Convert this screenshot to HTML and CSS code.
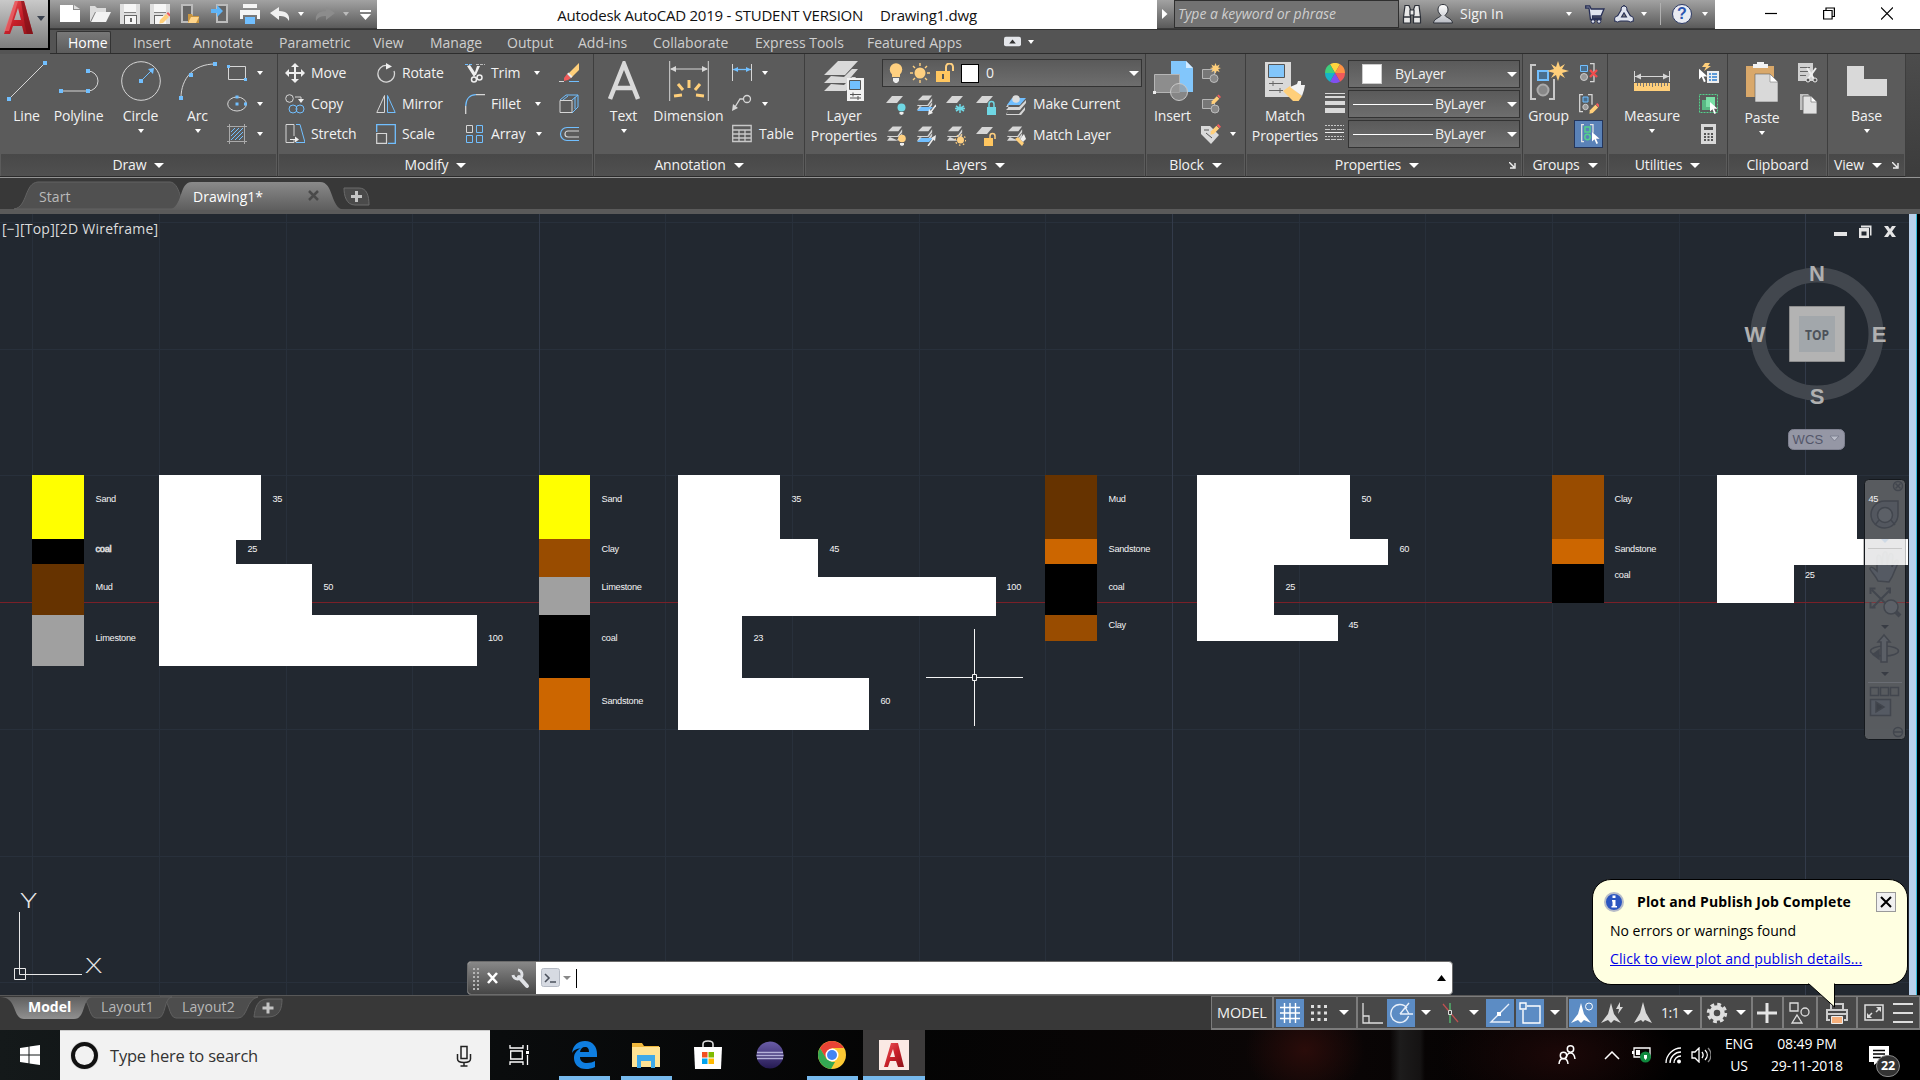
FILE: index.html
```html
<!DOCTYPE html>
<html lang="en">
<head>
<meta charset="utf-8">
<title>Autodesk AutoCAD 2019 - STUDENT VERSION</title>
<link rel="stylesheet" href="styles.css">
</head>
<body>
<svg class="defs" width="0" height="0">
  <defs>
    <linearGradient id="red" x1="0" y1="0" x2="1" y2="1"><stop offset="0" stop-color="#ef5a5c"/><stop offset=".5" stop-color="#c8202a"/><stop offset="1" stop-color="#8d1219"/></linearGradient>
    <linearGradient id="ecl" x1="0" y1="0" x2="0" y2="1"><stop offset="0" stop-color="#6a5da8"/><stop offset="1" stop-color="#251a52"/></linearGradient>
    <linearGradient id="silver" x1="0" y1="0" x2="0" y2="1"><stop offset="0" stop-color="#fff"/><stop offset="1" stop-color="#b9bcc4"/></linearGradient>
    <symbol id="sheets" viewBox="0 0 20 20"><path fill="#d6d6d6" d="M7 0h10l-4 5H2zM5 6l-3 4h10l5-7v3l-4 5H1zM4 11l-3 4h10l6-8v3l-4 5z"/></symbol>
    <symbol id="pencil" viewBox="0 0 12 12"><path fill="#ffcf7a" d="M1 8l6-6 3 3-6 6-3.600.6z"/><path fill="#f25c5c" d="M7.500 1.500L9 0l3 3-1.500 1.500z"/></symbol>
    <symbol id="cursor" viewBox="0 0 10 15"><path fill="#fff" d="M0 0v12l3-3 2.500 6 2-1L5 8.500h4.500z"/></symbol>
  </defs>
</svg>

<header class="top">
  <button class="app">
    <svg width="30" height="34" viewBox="0 0 30 34"><path fill="url(#red)" d="M11 0h9l9 33h-9l-2-8H9l-3 8H0zM14 7l-4 12h7z"/><path fill="#7d1118" d="M17 0h3l9 33h-6l-2-8z" opacity=".6"/><path fill="#f0777a" d="M11 0h3L5 30H0z" opacity=".6"/></svg>
    <i class="tri dark"></i>
  </button>
  <div class="titlebar">
    <div class="qat">
      <svg width="20" height="20" viewBox="0 0 20 20"><path fill="#fff" d="M0 1h13v5h7v12H0z"/><path fill="#ddd" d="M14 1l6 4h-6z"/></svg>
      <svg width="21" height="20" viewBox="0 0 21 20"><path fill="#dcdcdc" d="M0 2h5l2 2h9v4H5L0 18z"/><path fill="#f2f2f2" d="M6 8h15l-5 10H1z"/></svg>
      <svg width="20" height="20" viewBox="0 0 20 20"><path fill="#dedede" d="M0 0h4v9h12V0h4v20H0z"/><path fill="#f6f6f6" d="M4 0h12v8H4zM4 12h12v8H4z"/><path fill="#666" d="M4 11h13v9h-1v-8H5v8H4zM10 14h2v4h-2z"/></svg>
      <svg width="20" height="20" viewBox="0 0 20 20"><path fill="#dedede" d="M0 0h4v9h12V0h4v20H0z"/><path fill="#f6f6f6" d="M4 0h12v8H4zM4 12h12v8H4z"/><path fill="#666" d="M4 11h9v1H5v8H4z"/><use href="#pencil" x="9" y="8" width="12" height="12"/></svg>
      <svg width="20" height="20" viewBox="0 0 20 20"><path fill="#666" stroke="#bcbcbc" stroke-width="2" d="M2 1h10v17H2z"/><path fill="#c89540" d="M8 10h4l1 2h6v7H8z"/><path fill="#ffd58b" d="M11 13h8l-3 6H8z"/></svg>
      <svg width="20" height="20" viewBox="0 0 20 20"><path fill="#666" stroke="#bcbcbc" stroke-width="2" d="M6 1h10v17H6z"/><path fill="#5eb4f7" d="M0 5h6V1l6 6-6 6V9H0z"/></svg>
      <svg width="20" height="20" viewBox="0 0 20 20"><path fill="#f5f5f5" d="M3 0h14v4H3zM0 6h20v9h-3v-4H3v4H0z"/><path fill="#71bfff" d="M5 13h10v7H5z"/></svg>
      <svg width="20" height="20" viewBox="0 0 20 20"><path fill="#f0f0f0" d="M0 9l9-6v4c8 0 11 4 10 10-2-4-5-5-10-5v4z"/></svg>
      <i class="tri"></i>
      <svg width="20" height="20" viewBox="0 0 20 20"><path fill="#8c8c8c" d="M20 9l-9-6v4C3 7 0 11 1 17c2-4 5-5 10-5v4z"/></svg>
      <i class="tri dim"></i>
      <svg width="11" height="20" viewBox="0 0 11 20"><path fill="#fff" d="M0 6h11v2H0zM0 10h11l-5.500 6z"/></svg>
    </div>
    <div class="caption"><span>Autodesk AutoCAD 2019 - STUDENT VERSION</span><span>Drawing1.dwg</span></div>
    <div class="info">
      <svg class="play" width="6" height="10" viewBox="0 0 6 10"><path fill="#fff" d="M0 0l5.500 5L0 10z"/></svg>
      <div class="search">Type a keyword or phrase</div>
      <svg class="i1" width="22" height="20" viewBox="0 0 22 20"><g fill="#e8e8e8" stroke="#2c3038" stroke-width="1.200"><path d="M4 1.500h4l1.500 4V19h-7v-6zM14 1.500h4l1.500 11.500v6h-7V5.500z"/><path d="M9 6h4v5H9z"/></g><path stroke="#2c3038" stroke-width="1.500" d="M2.500 13h7M12.500 13h7"/></svg>
      <svg class="i2" width="20" height="20" viewBox="0 0 20 20"><path fill="url(#silver)" stroke="#2c3038" d="M10 .5c4 0 5 3 5 5.500S13 10 12 11.500c1 2 7 3 7.500 7.500H.5c.5-4.500 6.500-5.500 7.500-7.500C7 10 5 8.500 5 6S6 .5 10 .5z"/></svg>
      <span class="signin">Sign In</span>
      <i class="tri t1"></i>
      <svg class="i3" width="20" height="19" viewBox="0 0 20 19"><path fill="#dfe3ee" stroke="#272f55" stroke-width="1.300" d="M.7 1h4l1.500 3H19l-3 7H7.500v2H16v1.500H5.500L4 3H.7z"/><circle cx="8" cy="16.500" r="1.800" fill="#dfe3ee" stroke="#272f55"/><circle cx="14" cy="16.500" r="1.800" fill="#dfe3ee" stroke="#272f55"/></svg>
      <svg class="i4" width="20" height="18" viewBox="0 0 20 18"><path fill="none" stroke="#272f55" stroke-width="5" d="M10 4L4 14h12z"/><g fill="#dfe3ee" stroke="#272f55"><circle cx="10" cy="4" r="3"/><circle cx="3.500" cy="14" r="3"/><circle cx="16.500" cy="14" r="3"/></g><path fill="none" stroke="#dfe3ee" stroke-width="2.800" d="M10 4L4 14h12z"/></svg>
      <i class="tri t2"></i>
      <i class="sep"></i>
      <span class="help">?</span>
      <i class="tri t3"></i>
    </div>
    <div class="winbtns">
      <svg width="12" height="13" viewBox="0 0 12 13"><path stroke="#000" stroke-width="1.200" d="M0 6.500h12"/></svg>
      <svg width="12" height="13" viewBox="0 0 12 13"><path fill="none" stroke="#000" stroke-width="1.200" d="M.6 3.500h8.500v8.500H.6zM3 3V1h8.400v8.500H9"/></svg>
      <svg width="12" height="13" viewBox="0 0 12 13"><path stroke="#000" stroke-width="1.200" d="M0 .5l12 12M12 .5l-12 12"/></svg>
    </div>
  </div>
  <nav class="tabs">
    <span class="on">Home</span><span>Insert</span><span>Annotate</span><span>Parametric</span><span>View</span><span>Manage</span><span>Output</span><span>Add-ins</span><span>Collaborate</span><span>Express Tools</span><span>Featured Apps</span>
    <svg width="17" height="11" viewBox="0 0 18 11"><rect width="18" height="10" y=".5" rx="2" fill="#e4e6ea"/><path fill="#333" d="M5.500 7.500L9 3.500l3.500 4z"/></svg><i class="tri"></i>
  </nav>
</header>

<main class="ribbon">
  <section class="panel draw">
    <div class="body">
      <div class="tool"><svg width="40" height="40" viewBox="0 0 40 40"><path stroke="#d6d6d6" d="M2 38L38 2"/><path fill="#71bfff" d="M0 36h4v4H0zM36 0h4v4h-4z"/></svg><span>Line</span></div>
      <div class="tool"><svg width="40" height="40" viewBox="0 0 40 40"><path fill="none" stroke="#d6d6d6" d="M2 30h27a9.500 9.500 0 0 0 0-20"/><path fill="#71bfff" d="M0 28h4v4H0zM27 28h4v4h-4zM27 8h4v4h-4z"/></svg><span>Polyline</span></div>
      <div class="tool"><svg width="40" height="40" viewBox="0 0 40 40"><circle cx="20" cy="20" r="19.300" fill="none" stroke="#d6d6d6"/><path stroke="#71bfff" d="M20 20l11-11"/><path fill="#71bfff" d="M18 18h4v4h-4zM33 7l-1 6-5-5z"/></svg><span>Circle</span><i class="tri"></i></div>
      <div class="tool"><svg width="40" height="40" viewBox="0 0 40 40"><path fill="none" stroke="#d6d6d6" d="M3 37C3 17 16 3 37 3"/><path fill="#71bfff" d="M1 35h4v4H1zM11 12h4v4h-4zM35 1h4v4h-4z"/></svg><span>Arc</span><i class="tri"></i></div>
      <div class="rows">
        <div><svg width="20" height="20" viewBox="0 0 20 20"><path fill="none" stroke="#d6d6d6" d="M1.500 3.500h17v13h-17z"/><path fill="#71bfff" d="M0 2h3v3H0zM17 15h3v3h-3z"/></svg><i class="tri"></i></div>
        <div><svg width="20" height="20" viewBox="0 0 20 20"><ellipse cx="10" cy="10" rx="9.300" ry="7" fill="none" stroke="#d6d6d6"/><path fill="#71bfff" d="M8.500 1.500h3v3h-3zM8.500 8.500h3v3h-3zM17 8.500h3v3h-3z"/></svg><i class="tri"></i></div>
        <div><svg width="20" height="20" viewBox="0 0 20 20"><path stroke="#aaa" d="M0 2.500h20M0 17.500h20M2.500 0v20M17.500 0v20"/><path stroke="#71bfff" d="M4 8l4-4M4 12l8-8M4 16l12-12M8 16l8-8M12 16l4-4"/></svg><i class="tri"></i></div>
      </div>
    </div>
    <footer>Draw<i class="tri wide"></i></footer>
  </section>

  <section class="panel modify">
    <div class="body">
      <div class="rows m1">
        <div><svg width="20" height="20" viewBox="0 0 20 20"><path fill="#eee" d="M10 0l4 4h-3v5h5V6l4 4-4 4v-3h-5v5h3l-4 4-4-4h3v-5H4v3l-4-4 4-4v3h5V4H6z"/></svg>Move</div>
        <div><svg width="20" height="20" viewBox="0 0 20 20"><g fill="none" stroke="#d6d6d6"><circle cx="4.500" cy="4.500" r="3.800"/><path d="M10 3h6v3"/></g><path fill="#eee" d="M13 5h6l-3 4z"/><g fill="none" stroke="#71bfff"><circle cx="8" cy="15" r="4"/><circle cx="15" cy="15" r="4"/></g></svg>Copy</div>
        <div><svg width="20" height="20" viewBox="0 0 20 20"><path fill="none" stroke="#d6d6d6" d="M9 12V.5H1v18h8v-3"/><path fill="none" stroke="#71bfff" d="M11 .5h4l5 18h-9"/><path stroke="#eee" d="M5 15.500h6"/><path fill="#eee" d="M10 12.500l4 3-4 3z"/></svg>Stretch</div>
      </div>
      <div class="rows m2">
        <div><svg width="20" height="20" viewBox="0 0 20 20"><path fill="none" stroke="#d6d6d6" stroke-width="1.300" d="M11 2.500A8.300 8.300 0 1 0 18 8"/><path fill="#eee" d="M10 0l6 3.500-6 3z"/></svg>Rotate</div>
        <div><svg width="20" height="20" viewBox="0 0 20 20"><path fill="none" stroke="#d6d6d6" d="M8.500 1.500v17H.8z"/><path fill="none" stroke="#71bfff" d="M11.500 1.500v17h7.700z"/></svg>Mirror</div>
        <div><svg width="20" height="20" viewBox="0 0 20 20"><path fill="none" stroke="#71bfff" stroke-width="1.300" d="M.7 8V.7h18.600v18.600H12"/><path fill="none" stroke="#d6d6d6" stroke-width="1.200" d="M.7 9.500h9.800v9.800H.7z"/></svg>Scale</div>
      </div>
      <div class="rows m3">
        <div><svg width="20" height="20" viewBox="0 0 20 20"><path stroke="#71bfff" stroke-dasharray="3 1" d="M0 1.500h8"/><path stroke="#bbb" stroke-dasharray="3 1" d="M11 1.500h9"/><path fill="#eee" d="M2 3l3-1 6 9-2 3zM12 3h3l-4 9H9z"/><g fill="none" stroke="#eee" stroke-width="1.500"><circle cx="9" cy="16.500" r="2.500"/><circle cx="14.500" cy="14.500" r="2.500"/></g></svg>Trim<i class="tri"></i></div>
        <div><svg width="20" height="20" viewBox="0 0 20 20"><path fill="none" stroke="#71bfff" stroke-width="1.300" d="M.7 12C1 5 5 .7 11 .7"/><path fill="none" stroke="#d6d6d6" stroke-width="1.300" d="M.7 12v8M11 .7h9"/></svg>Fillet<i class="tri f"></i></div>
        <div><svg width="20" height="20" viewBox="0 0 20 20"><path fill="none" stroke="#d6d6d6" d="M1.500 1.500h6v7h-6z"/><path fill="none" stroke="#71bfff" d="M11.500 1.500h6v7h-6zM1.500 11.500h6v7h-6zM11.500 11.500h6v7h-6z"/></svg>Array<i class="tri a"></i></div>
      </div>
      <div class="rows">
        <div><svg width="20" height="20" viewBox="0 0 20 20"><path stroke="#d6d6d6" d="M0 18.500h5"/><path stroke="#71bfff" d="M10 18.500h10"/><path fill="#ffcf7a" d="M9 11L20 0v7l-8 8z"/><path fill="#f25c5c" d="M5 15l3-4 4 4-3 2-4 1z"/><path fill="#eee" d="M8 11l1.500-1.500 4 4L12 15z"/></svg></div>
        <div><svg width="20" height="20" viewBox="0 0 20 20"><path fill="none" stroke="#71bfff" d="M1 6l6-5h12v12l-6 6M13 6l6-5M4 6l5-4M16 3v12"/><path fill="none" stroke="#d6d6d6" d="M1 6.500h12v12H1z"/></svg></div>
        <div><svg width="20" height="20" viewBox="0 0 20 20"><path fill="none" stroke="#71bfff" stroke-width="1.200" d="M20 3.500H8a6.500 6.500 0 0 0 0 13h12"/><path fill="none" stroke="#d6d6d6" stroke-width="1.200" d="M20 7H9a3 3 0 0 0 0 6h11"/></svg></div>
      </div>
    </div>
    <footer>Modify<i class="tri wide"></i></footer>
  </section>

  <section class="panel annot">
    <div class="body">
      <div class="tool"><svg width="40" height="40" viewBox="0 0 40 40"><path fill="none" stroke="#d9d9d9" stroke-width="4.500" d="M6 38L20 3l14 35M11 27h18"/></svg><span>Text</span><i class="tri"></i></div>
      <div class="tool"><svg width="40" height="40" viewBox="0 0 40 40"><path stroke="#d6d6d6" d="M.7 0v40M39.300 0v40M2 8h36"/><path fill="#d6d6d6" d="M1 8l6-3v6zM39 8l-6-3v6z"/><path stroke="#ffcf7a" stroke-width="3" d="M20 19v8M9 23l5 6M31 23l-5 6M5 35l8-1M35 35l-8-1"/></svg><span>Dimension</span></div>
      <div class="rows">
        <div><svg width="20" height="20" viewBox="0 0 20 20"><path stroke="#d6d6d6" d="M.5 1v17M19.500 1v17"/><path stroke="#71bfff" stroke-width="1.300" d="M1 6.500h18"/><path fill="#71bfff" d="M1 6.500l5-2.500v5zM19 6.500L14 4v5z"/></svg><i class="tri"></i></div>
        <div><svg width="20" height="20" viewBox="0 0 20 20"><circle cx="15" cy="5" r="3.500" fill="none" stroke="#d6d6d6" stroke-width="1.300"/><path fill="none" stroke="#d6d6d6" stroke-width="1.300" d="M11 5H8l-5 8"/><path fill="#d6d6d6" d="M0 17l1-7 5 4z"/></svg><i class="tri"></i></div>
        <div><svg width="20" height="20" viewBox="0 0 20 20"><path fill="none" stroke="#c8c8c8" stroke-width="1.300" d="M.7 1.500h18.500v16H.7zM.7 6h18.500M.7 10h18.500M.7 14h18.500M7 6v12M13 6v12"/></svg>Table</div>
      </div>
    </div>
    <footer>Annotation<i class="tri wide"></i></footer>
  </section>

  <section class="panel layers">
    <div class="body">
      <div class="tool two"><svg width="40" height="40" viewBox="0 0 40 40"><path fill="#d9d9d9" d="M14 0h20L21 14H0zM7 15L0 22h22l12-14h-6l-8 8zM7 23l-7 7h22l4-5 6-9h-4L20 24z"/><path fill="#f2f2f2" d="M23 17h17v23H23z"/><path fill="#71bfff" stroke="#555" d="M25.500 19.500h11v9h-11z"/><path stroke="#555" d="M26 33.500h11M26 37h11M29 31.500v4M34 35v4"/></svg><span>Layer<br>Properties</span></div>
      <div class="lcol">
        <div class="combo">
          <svg width="14" height="20" viewBox="0 0 14 20"><circle cx="7" cy="6.500" r="6.200" fill="#ffd080"/><path fill="#ffd080" d="M3 10h8v4H3z"/><path fill="#eee" d="M4 15h6v3l-2 2H6l-2-2z"/></svg>
          <svg width="20" height="20" viewBox="0 0 20 20"><circle cx="10" cy="10" r="5.500" fill="#ffd080"/><path stroke="#ffd080" stroke-width="1.400" d="M10 0v3M10 17v3M0 10h3M17 10h3M3 3l2 2M15 15l2 2M17 3l-2 2M3 17l2-2"/></svg>
          <svg width="18" height="20" viewBox="0 0 18 20"><path fill="#ffc65f" d="M0 8h14v11H0z"/><path fill="none" stroke="#ffd080" stroke-width="2" d="M10 8V4a3.500 3.500 0 0 1 7 0v4"/><path fill="#555" d="M6 11h2v5H6z"/></svg>
          <i class="swatch b"></i><span>0</span><i class="tri wide"></i>
        </div>
        <div class="lrow">
          <svg width="20" height="20" viewBox="0 0 20 20"><path fill="#d6d6d6" d="M6 1h11l-6 7H0z"/><circle cx="15.500" cy="12.500" r="4" fill="#6fd7e4"/><path fill="#eee" d="M13.500 17h4v2l-2 1-2-1z"/></svg>
          <svg width="20" height="20" viewBox="0 0 20 20"><use href="#sheets" width="19" height="20"/><path fill="#71bfff" d="M1 16l4-4h12l-4 4z"/><path stroke="#eee" stroke-width="1.500" d="M20 10l-6 8"/><path fill="#eee" d="M12 20l1-6 4 4z"/></svg>
          <svg width="20" height="20" viewBox="0 0 20 20"><path fill="#d6d6d6" d="M6 1h11l-6 7H0z"/><path stroke="#6fd7e4" stroke-width="1.500" d="M14 9v9M10 11l8 5M10 16l8-5M9 13.500h10"/></svg>
          <svg width="20" height="20" viewBox="0 0 20 20"><path fill="#d6d6d6" d="M6 1h11l-6 7H0z"/><path fill="#6fd7e4" d="M11 12h9v8h-9z"/><path fill="none" stroke="#6fd7e4" stroke-width="1.500" d="M13 12v-3a2.500 2.500 0 0 1 5 0v3"/></svg>
          <svg width="20" height="20" viewBox="0 0 20 20"><path fill="#d6d6d6" d="M3 8L0 12h13l7-7v3l-6 7H0l2-2zM2 16l-2 3h13l6-7v3l-4 5H0z"/><path fill="#71bfff" d="M6 3h14l-6 7H1z"/><circle cx="10" cy="4" r="3.800" fill="#ddd"/></svg>
          <span>Make Current</span>
        </div>
        <div class="lrow">
          <svg width="20" height="20" viewBox="0 0 20 20"><use href="#sheets" width="19" height="20"/><circle cx="16" cy="12.500" r="3.800" fill="#ffd080"/><path fill="#eee" d="M14 17h4v2l-2 1-2-1z"/></svg>
          <svg width="20" height="20" viewBox="0 0 20 20"><use href="#sheets" width="19" height="20"/><path fill="#71bfff" d="M1 16l4-4h12l-4 4z"/><path stroke="#eee" stroke-width="1.500" d="M12 20l5-7"/><path fill="#eee" d="M20 9l-1 6-4-3z"/></svg>
          <svg width="20" height="20" viewBox="0 0 20 20"><use href="#sheets" width="19" height="20"/><circle cx="14.500" cy="14" r="3.500" fill="#ffd080"/><circle cx="14.500" cy="14" r="5.200" fill="none" stroke="#ffd080" stroke-width="1.300" stroke-dasharray="1.500 2.500"/></svg>
          <svg width="20" height="20" viewBox="0 0 20 20"><path fill="#d6d6d6" d="M6 1h11l-6 7H0z"/><path fill="#ffc65f" d="M8 12h9v8H8z"/><path fill="none" stroke="#ffd080" stroke-width="1.500" d="M14 12v-2a2.500 2.500 0 0 1 5 0v3"/></svg>
          <svg width="20" height="20" viewBox="0 0 20 20"><use href="#sheets" width="19" height="20"/><path fill="#ffcf7a" d="M9 13l3-2 6 6-2 3z"/><path fill="#eee" d="M14 13l4-5 2 5-3 3z"/></svg>
          <span>Match Layer</span>
        </div>
      </div>
    </div>
    <footer>Layers<i class="tri wide"></i></footer>
  </section>

  <section class="panel block">
    <div class="body">
      <div class="tool"><svg width="40" height="40" viewBox="0 0 40 40"><path fill="#82c6fb" d="M18 0h15l7 7v24H18z"/><path fill="#d5ecff" d="M33 0l7 7h-7z"/><path fill="#8d8d8d" stroke="#b5b5b5" d="M1.500 13.500h25v18h-25z"/><circle cx="26" cy="31" r="8.500" fill="#999" fill-opacity=".7" stroke="#c8c8c8"/><path fill="#eee" d="M0 30h3v3H0z"/></svg><span>Insert</span></div>
      <div class="rows">
        <div><svg width="20" height="20" viewBox="0 0 20 20"><path fill="#777" stroke="#b5b5b5" d="M1.500 6.500h12v9h-12z"/><circle cx="13" cy="15.500" r="4" fill="#888" stroke="#bbb"/><path fill="#ffcf7a" d="M14.500 0l1.200 3 3-1.500-1.500 3 3 .5-3 1.200 1.500 3-3-1.500-1.200 3-1.200-3-3 1.500 1.500-3-3-1.200 3-.5-1.500-3 3 1.500z"/></svg></div>
        <div><svg width="20" height="20" viewBox="0 0 20 20"><path fill="#777" stroke="#b5b5b5" d="M1.500 5.500h12v9h-12z"/><circle cx="14" cy="15" r="4" fill="#888" stroke="#bbb"/><use href="#pencil" x="10" width="10" height="11"/></svg></div>
        <div><svg width="20" height="20" viewBox="0 0 20 20"><path fill="#d9d9d9" d="M0 2h9l9 9-8 9-10-10z"/><path stroke="#555" d="M3 6h5M5 9l6 5"/><use href="#pencil" x="9" width="11" height="11"/></svg><i class="tri"></i></div>
      </div>
    </div>
    <footer>Block<i class="tri wide"></i></footer>
  </section>

  <section class="panel props">
    <div class="body">
      <div class="tool two"><svg width="40" height="40" viewBox="0 0 40 40"><path fill="#d9d9d9" d="M0 1h26v35H0z"/><path fill="#82c6fb" stroke="#555" d="M3.500 3.500h16v13h-16z"/><path stroke="#666" d="M4 22.500h14M4 29.500h14M8 20v5M15 27v5"/><path fill="#ffcf7a" d="M18 30l7-5 12 10-4 6h-4z"/><path fill="#f2f2f2" d="M25 26l7-3 1-3h3v4h4l-1 5-2 6z"/></svg><span>Match<br>Properties</span></div>
      <div class="rows pi">
        <div><svg width="20" height="20" viewBox="-10 -10 20 20"><path fill="#ffd53e" d="M0 0L-5-8.700A10 10 0 0 1 5-8.700z"/><path fill="#ff9243" d="M0 0L5-8.700A10 10 0 0 1 10 0z"/><path fill="#f05a5a" d="M0 0h10A10 10 0 0 1 5 8.700z"/><path fill="#8050f0" d="M0 0L5 8.700A10 10 0 0 1-5 8.700z"/><path fill="#16b4c8" d="M0 0L-5 8.700A10 10 0 0 1-10 0z"/><path fill="#3fcf7c" d="M0 0h-10A10 10 0 0 1-5-8.700z"/></svg></div>
        <div><svg width="20" height="20" viewBox="0 0 20 20"><path fill="#d9d9d9" d="M0 0h20v1H0zM0 3h20v2H0zM0 8h20v4H0zM0 15h20v5H0z"/></svg></div>
        <div><svg width="20" height="20" viewBox="0 0 20 20"><path stroke="#c8c8c8" stroke-dasharray="2 1" d="M0 2.500h19M0 13.500h19"/><path stroke="#c8c8c8" stroke-dasharray="5 1" d="M0 6.500h19M0 16.500h19"/><path stroke="#eee" d="M0 9.500h19"/></svg></div>
      </div>
      <div class="pcombos">
        <div class="combo c1"><i class="swatch"></i><span>ByLayer</span><i class="tri wide"></i></div>
        <div class="combo"><i class="rule"></i><span>ByLayer</span><i class="tri wide"></i></div>
        <div class="combo"><i class="rule"></i><span>ByLayer</span><i class="tri wide"></i></div>
      </div>
    </div>
    <footer class="ex">Properties<i class="tri wide"></i><svg class="diag" width="7" height="7" viewBox="0 0 7 7"><path fill="none" stroke="#eee" stroke-width="1.400" d="M0 0l5 5M6 1v5H1"/></svg></footer>
  </section>

  <section class="panel groups">
    <div class="body">
      <div class="tool"><svg width="40" height="40" viewBox="0 0 40 40"><path fill="none" stroke="#c8c8c8" stroke-width="2" d="M7 4H2v34h5M20 38h5V18"/><path fill="#4a6f8e" stroke="#71bfff" stroke-width="2" d="M9 10h10v9H9z"/><circle cx="14" cy="29" r="5.500" fill="#888" stroke="#aaa" stroke-width="2"/><path fill="#ffcf7a" d="M29 0l2 6 5-3-3 5 7 2-7 2 3 5-5-3-2 6-2-6-5 3 3-5-7-2 7-2-3-5 5 3z"/></svg><span>Group</span></div>
      <div class="rows">
        <div><svg width="20" height="20" viewBox="0 0 20 20"><path fill="none" stroke="#d6d6d6" stroke-width="1.300" d="M11 .7h4v18h-4"/><path fill="#4a6f8e" stroke="#71bfff" d="M1.500 2.500h7v6h-7z"/><circle cx="5" cy="14" r="3.500" fill="#999" stroke="#ccc"/><path stroke="#f04c4c" stroke-width="2.400" d="M11 7l7 7M18 7l-7 7"/></svg></div>
        <div><svg width="20" height="20" viewBox="0 0 20 20"><path fill="none" stroke="#d6d6d6" stroke-width="1.300" d="M4 .7H.7v17H4M9 .7h4v10"/><path fill="#4a6f8e" stroke="#71bfff" d="M4 3h5v5H4z"/><circle cx="6.500" cy="13" r="2.700" fill="#999" stroke="#ccc"/><use href="#pencil" x="10" y="9" width="11" height="11"/></svg></div>
        <div class="sel"><svg width="20" height="20" viewBox="0 0 20 20"><path fill="none" stroke="#e4e4e4" stroke-width="1.300" d="M4 .7H1.700v17H4M10 .7h3v8"/><path fill="none" stroke="#53d28b" stroke-width="1.500" d="M5 3h5v5H5z"/><circle cx="7.500" cy="13" r="2.700" fill="none" stroke="#53d28b" stroke-width="1.500"/><use href="#cursor" x="12" y="8" width="8" height="12"/></svg></div>
      </div>
    </div>
    <footer>Groups<i class="tri wide"></i></footer>
  </section>

  <section class="panel utils">
    <div class="body">
      <div class="tool"><svg width="40" height="40" viewBox="0 0 40 40"><path stroke="#d6d6d6" d="M2.500 10v11M37.500 10v11M3 15.500h34"/><path fill="#d6d6d6" d="M3 15.500l6-3v6zM37 15.500l-6-3v6z"/><path fill="#ffcf7a" d="M2 22h36v8H2z"/><path stroke="#777" d="M5.500 22v3M8.500 22v3M11.500 22v4M14.500 22v3M17.500 22v3M20.500 22v4M23.500 22v3M26.500 22v3M29.500 22v4M32.500 22v3M35.500 22v3"/></svg><span>Measure</span><i class="tri"></i></div>
      <div class="rows">
        <div><svg width="20" height="20" viewBox="0 0 20 20"><use href="#cursor" y="5" width="9" height="15"/><path fill="#ffcf7a" d="M6 0h5l-2 3h3L5 8l2-4H3z"/><path fill="#eee" d="M8 8h12v12H8z"/><path stroke="#2f7fd0" stroke-width="1.500" d="M10 11h2M13 11h5M10 14h2M13 14h5M10 17h2M13 17h5"/></svg></div>
        <div><svg width="20" height="20" viewBox="0 0 20 20"><path fill="none" stroke="#53d28b" stroke-dasharray="2 1" d="M.5.5h18v18H.5z"/><path fill="#59b984" d="M3 6h4v7h6v3H3z"/><path fill="#7be0a7" d="M7 3h9v10H7z"/><use href="#cursor" x="11" y="8" width="8" height="12"/></svg></div>
        <div><svg width="20" height="20" viewBox="0 0 20 20"><path fill="#d9d9d9" d="M2 0h15v20H2z"/><path fill="#555" d="M5 3h9v3H5z"/><path stroke="#555" stroke-width="2" stroke-dasharray="2 1.500" d="M5 10h9M5 13h9M5 16h9"/></svg></div>
      </div>
    </div>
    <footer>Utilities<i class="tri wide"></i></footer>
  </section>

  <section class="panel clip">
    <div class="body">
      <div class="tool"><svg width="40" height="42" viewBox="0 0 40 42"><path fill="#d9a86a" d="M4 5h28v31H4z"/><path fill="#f2f2f2" d="M11 3h4V1h7v2h4v4H11z"/><path fill="#d9d9d9" stroke="#5b5b5b" stroke-width=".6" d="M13 13h15l8 8v20H13z"/><path fill="#fff" stroke="#666" stroke-width=".5" d="M28 13l8 8h-8z"/></svg><span>Paste</span><i class="tri"></i></div>
      <div class="rows">
        <div><svg width="21" height="20" viewBox="0 0 21 20"><path fill="#d0d0d0" d="M1 0h15v18H1z"/><path stroke="#666" d="M3 4.500h10M3 8.500h8M3 12.500h6"/><path stroke="#eee" stroke-width="2" d="M10 5l7 11M19 5l-8 11"/><circle cx="11" cy="17" r="2" fill="#555" stroke="#eee"/><circle cx="18" cy="17" r="2" fill="#555" stroke="#eee"/></svg></div>
        <div><svg width="21" height="20" viewBox="0 0 21 20"><path fill="#c0c0c0" d="M3 0h8l4 4v12H3z"/><path fill="#e2e2e2" stroke="#5c5c5c" stroke-width=".8" d="M6 2h8l6 6v12H6z"/><path fill="#fff" stroke="#777" stroke-width=".7" d="M14 2l6 6h-6z"/></svg></div>
      </div>
    </div>
    <footer>Clipboard</footer>
  </section>

  <section class="panel view">
    <div class="body">
      <div class="tool"><svg width="40" height="40" viewBox="0 0 40 40"><path fill="#d9d9d9" d="M0 5h17v13h23v17H0z"/></svg><span>Base</span><i class="tri"></i></div>
    </div>
    <footer class="ex">View<i class="tri wide"></i><svg class="diag" width="7" height="7" viewBox="0 0 7 7"><path fill="none" stroke="#eee" stroke-width="1.400" d="M0 0l5 5M6 1v5H1"/></svg></footer>
  </section>
</main>

<div class="files">
  <svg class="shapes" width="400" height="32" viewBox="0 0 400 32">
    <defs><linearGradient id="ft" x1="0" y1="0" x2="0" y2="1"><stop offset="0" stop-color="#8a8a8a"/><stop offset="1" stop-color="#5e5e5e"/></linearGradient></defs>
    <path fill="#505050" stroke="#626262" d="M14 31c14-2 10-26 24-27h132c10 1 10 20 16 27z"/>
    <path fill="url(#ft)" d="M168 32c16-2 10-28 24-28h128c14 0 10 26 24 28z"/>
    <path fill="#4a4a4a" stroke="#6a6a6a" d="M344 10h15c8 0 10 8 10 17h-14c-9 0-11-10-11-17z"/>
    <path stroke="#c4c4c4" stroke-width="3" d="M356.500 13v11M351 18.500h11"/>
    <path stroke="#4a4a4a" stroke-width="2.500" d="M309 13l9 9M318 13l-9 9"/>
  </svg>
  <span class="f1">Start</span><span class="f2">Drawing1*</span>
</div>

<div class="viewport">
  <svg class="drawing" width="1909" height="781" viewBox="0 214 1909 781">
    <path stroke="#28303b" d="M32.500 214v781M159.500 214v781M286.500 214v781M412.500 214v781M665.500 214v781M792.500 214v781M919.500 214v781M1045.500 214v781M1299.500 214v781M1425.500 214v781M1552.500 214v781M1679.500 214v781M0 222.500h1909M0 349.500h1909M0 475.500h1909M0 729.500h1909M0 856.500h1909M0 982.500h1909"/>
    <path stroke="#333b4a" d="M539.500 214v781M1172.500 214v781M1805.500 214v781"/>
    <path stroke="#7a2028" d="M0 602.500h1909"/>
    <g>
      <path fill="#ff0" d="M32 475h52v64H32zM539 475h51v64h-51z"/>
      <path fill="#000" d="M32 539h52v25H32zM539 615h51v63h-51zM1045 564h52v51h-52zM1552 564h52v39h-52z"/>
      <path fill="#663300" d="M32 564h52v51H32zM1045 475h52v64h-52z"/>
      <path fill="#a0a0a0" d="M32 615h52v51H32zM539 577h51v38h-51z"/>
      <path fill="#994c00" d="M539 539h51v38h-51zM1045 615h52v26h-52zM1552 475h52v64h-52z"/>
      <path fill="#cc6600" d="M539 678h51v52h-51zM1045 539h52v25h-52zM1552 539h52v25h-52z"/>
    </g>
    <g fill="#fff">
      <path d="M159 475h102v65h-25v24h76v51h165v51H159z"/>
      <path d="M678 475h102v64h38v38h178v39H742v62h127v52H678z"/>
      <path d="M1197 475h153v64h38v26h-114v50h64v26h-141z"/>
      <path d="M1717 475h140v64h51v26h-114v38h-77z"/>
    </g>
    <g class="lbl">
      <text x="95.500" y="502">Sand</text><text x="95.500" y="552" class="glow">coal</text><text x="95.500" y="590">Mud</text><text x="95.500" y="641">Limestone</text>
      <text x="272.500" y="502">35</text><text x="247.500" y="552">25</text><text x="323.500" y="590">50</text><text x="488" y="641">100</text>
      <text x="601.500" y="502">Sand</text><text x="601.500" y="552">Clay</text><text x="601.500" y="590">Limestone</text><text x="601.500" y="641">coal</text><text x="601.500" y="704">Sandstone</text>
      <text x="791.500" y="502">35</text><text x="829.500" y="552">45</text><text x="1006.500" y="590">100</text><text x="753.500" y="641">23</text><text x="880.500" y="704">60</text>
      <text x="1108.500" y="502">Mud</text><text x="1108.500" y="552">Sandstone</text><text x="1108.500" y="590">coal</text><text x="1108.500" y="628">Clay</text>
      <text x="1361.500" y="502">50</text><text x="1399.500" y="552">60</text><text x="1285.500" y="590">25</text><text x="1348.500" y="628">45</text>
      <text x="1614.500" y="502">Clay</text><text x="1614.500" y="552">Sandstone</text><text x="1614.500" y="578">coal</text>
      <text x="1805" y="578">25</text>
    </g>
    <path fill="none" stroke="#f4f4f4" d="M926 677.500h46M977 677.500h46M974.500 629v45M974.500 681v45M972.500 674.500h4v6h-4z"/>
    <path fill="none" stroke="#e8e8e8" d="M14.500 968.500h11v11h-11zM19.500 912v62.500H82"/>
    <text class="ucs" x="20.500" y="908" textLength="16" lengthAdjust="spacingAndGlyphs">Y</text><text class="ucs" x="85.500" y="973" textLength="16" lengthAdjust="spacingAndGlyphs">X</text>
    <text class="vp" x="2" y="234" textLength="156">[−][Top][2D Wireframe]</text>
    <g>
      <circle cx="1817" cy="334" r="59" fill="none" stroke="#42474e" stroke-width="15"/>
      <path fill="#b3b3b3" stroke="#8d8d8d" d="M1789.500 306.500h55v55h-55z"/><path fill="#a2a7ab" d="M1799 316h36v36h-36z"/>
      <text class="top-face" x="1805" y="339.500" textLength="24" lengthAdjust="spacingAndGlyphs">TOP</text>
      <g class="compass"><text x="1817" y="280.500">N</text><text x="1817" y="404">S</text><text x="1755" y="342">W</text><text x="1879" y="342">E</text></g>
      <rect x="1788.500" y="429.500" width="56" height="20" rx="5" fill="#9597a5" stroke="#7f8190"/>
      <text class="wcs" x="1792.500" y="444">WCS</text><path fill="#b9bcc8" stroke="#7d8090" d="M1830 436h9l-4.500 5z"/>
    </g>
    <g class="mdi">
      <path d="M1834 232h13v4h-13z"/><path fill-rule="evenodd" d="M1859 228h10v10h-10zM1861.500 231.500h5v4h-5z"/><path d="M1861 225.500h10.500v10h-1.500v-8h-9z"/><path d="M1884 226h4l2 3 2-3h4l-4 5.500 4 5.500h-4l-2-3-2 3h-4l4-5.500z"/>
    </g>
    <g class="nav">
      <rect x="1864.500" y="479.500" width="41" height="260" rx="4" fill="#5c6063" fill-opacity=".93" stroke="#15191e"/>
      <path stroke="#7a3a40" d="M1865 602.500h40"/><path stroke="#6a6d74" d="M1868 682.500h34"/>
      <g fill="none" stroke="#42464e" stroke-width="1.500">
        <circle cx="1898" cy="486" r="4.500"/><path d="M1895.500 483.500l5 5M1900.500 483.500l-5 5"/>
        <path fill="#53575f" d="M1885 501h13v13a13.500 13.500 0 1 1-13-13z"/><circle cx="1885" cy="515" r="7.500" fill="#5c6067"/><path d="M1879 520l-4 5M1891 520l4 5"/>
        <path fill="#555a63" d="M1878 581c-2-5-6-8-8-12 0-3 3-2 7 2v-14c1-3 3-2 4 0l1 8 1-11c1-3 4-3 4 0v11l2-10c1-2 4-2 4 1l-1 11 3-6c2-2 4-1 3 2l-6 14-3 5z"/>
        <path stroke-width="2" d="M1872 590l18 18M1890 590l-18 18M1870.500 594v-5.500h5M1886 588.500h4v5M1870.500 602v5.500h5"/><circle cx="1891" cy="607" r="7" fill="#5c6067"/><path stroke-width="4" d="M1896 612l4 4"/>
        <ellipse cx="1884.500" cy="651" rx="14" ry="5"/><path fill="#5b5f66" d="M1881 662v-20h-3l6-7 6 7h-3v20z"/><path fill="#42464e" d="M1879 650v9l-6-4.500z"/>
        <path d="M1870.500 687.500h8v8h-8zM1880.500 687.500h8v8h-8zM1890.500 687.500h8v8h-8z"/><path fill="#555a63" d="M1870.500 699.500h20v16h-20z"/><path fill="#3c4048" d="M1876 702v10l8-5z"/>
        <circle cx="1898" cy="732" r="4.500"/><path d="M1894 732h8"/>
      </g>
      <path fill="#f6f6f6" fill-opacity=".9" d="M1865 539h40v26h-40z"/><path stroke="#bdbdbd" d="M1863.500 539v26M1905.500 539v26"/><path stroke="#c8c8c8" d="M1868 548.500h34"/>
      <path fill="#cfdae6" d="M1881 539h8l-4 4z"/><path fill="#383c44" d="M1881 625h8l-4 4zM1881 672h8l-4 4z"/>
      <text class="lbl" x="1868.500" y="502">45</text>
    </g>
  </svg>
  <div class="cmd">
    <div class="grip">
      <svg width="67" height="34" viewBox="0 0 67 34"><path stroke="#b5b5b5" stroke-width="2" stroke-dasharray="2 2" d="M6 7v22M10 7v22"/><path stroke="#fff" stroke-width="2.600" d="M20 12l9 10M29 12l-9 10"/><path stroke="#e0e2e6" stroke-width="4" stroke-linecap="round" d="M51 16l8 9"/><path fill="none" stroke="#e0e2e6" stroke-width="3" d="M50 9a4.500 4.500 0 1 1-5 5"/></svg>
    </div>
    <svg width="22" height="20" viewBox="0 0 22 20"><rect x=".5" y=".5" width="18" height="18" rx="2" fill="#d6dae2" stroke="#b5bac4"/><path fill="none" stroke="#4b515c" stroke-width="1.600" d="M4 6l4 4-4 4M9 14h6"/></svg>
    <i class="tri gray"></i><i class="caret"></i>
    <svg class="up" width="9" height="6" viewBox="0 0 9 6"><path d="M0 6l4.500-6L9 6z"/></svg>
  </div>
</div>

<div class="bottom">
  <div class="layouts">
    <svg class="shapes" width="300" height="34" viewBox="0 0 300 34">
      <defs><linearGradient id="lt" x1="0" y1="0" x2="0" y2="1"><stop offset="0" stop-color="#606060"/><stop offset="1" stop-color="#909090"/></linearGradient></defs>
      <path fill="#4d4d4d" stroke="#606060" d="M160 1c10 0 8 21 16 21h62c10 0 8-19 20-21z"/>
      <path fill="#4d4d4d" stroke="#606060" d="M80 1c10 0 8 21 16 21h62c8 0 6-21 14-21z"/>
      <path fill="url(#lt)" d="M0 1c18 0 12 22 24 22h50c12 0 8-20 18-22z"/>
      <path fill="#4a4a4a" stroke="#626262" d="M282 3c0 9-2 18-14 18h-14c1-9 3-18 14-18z"/><path stroke="#c4c4c4" stroke-width="3" d="M268 6.500v11M262.500 12h11"/>
    </svg>
    <b>Model</b><span class="l1">Layout1</span><span class="l2">Layout2</span>
  </div>
  <div class="status">
    <div class="g g1">MODEL</div>
    <div class="g g2"><svg class="on" width="28" height="28" viewBox="0 0 28 28"><path stroke="#fff" stroke-width="1.400" d="M8.500 4v20M14 4v20M19.500 4v20M4 8.500h20M4 14h20M4 19.500h20"/></svg><svg width="28" height="28" viewBox="0 0 28 28"><path stroke="#ddd" stroke-width="3" stroke-dasharray="3 3.500" d="M7 7.500h16M7 14h16M7 20.500h16"/></svg><i class="tri wide"></i></div>
    <div class="g g3">
      <svg width="28" height="28" viewBox="0 0 28 28"><path fill="none" stroke="#ddd" stroke-width="1.300" d="M4 4v20h20M4 17h6v7"/></svg>
      <svg class="on" width="28" height="28" viewBox="0 0 28 28"><path fill="none" stroke="#e8f0fa" stroke-width="1.400" d="M20 9a9 9 0 1 0 1.500 8M13 15h13M13 15l9-11M18 8l4 7"/></svg><i class="tri wide"></i>
      <svg class="iso" width="20" height="28" viewBox="0 0 20 28"><path stroke="#c05050" stroke-width="1.300" d="M3 5l15 18"/><path stroke="#53c070" stroke-width="1.300" d="M10 4v20"/><path fill="#444" stroke="#ddd" d="M8.500 11.500h3v4h-3z"/></svg><i class="tri wide"></i>
      <svg class="on" width="28" height="28" viewBox="0 0 28 28"><path fill="none" stroke="#e8f0fa" stroke-width="1.400" d="M23 5L5 23h19"/><path fill="#fff" d="M11 13h4v4h-4z"/></svg>
      <svg class="on n" width="28" height="28" viewBox="0 0 28 28"><path fill="none" stroke="#fff" stroke-width="1.400" d="M11 7h13v17H7V11M4 4h6v6H4z"/></svg><i class="tri wide"></i>
    </div>
    <div class="g g4">
      <svg class="on" width="28" height="28" viewBox="0 0 28 28"><path fill="#fff" d="M12 4l3 11 7 9-7-3-3 3-3-3-7 3 7-9z"/><circle cx="20" cy="7.500" r="3.500" fill="none" stroke="#fff"/></svg>
      <svg width="28" height="28" viewBox="0 0 28 28"><path fill="#d9d9d9" d="M12 4l3 11 7 9-7-3-3 3-3-3-7 3 7-9zM21 3l-4 7h3l-1 5 5-7h-3z"/></svg>
      <svg width="28" height="28" viewBox="0 0 28 28"><path fill="#d9d9d9" d="M14 3l3 11 6 10-7-3-2 2-2-2-7 3 6-10z"/></svg>
      <span>1:1</span><i class="tri wide"></i>
    </div>
    <div class="g g5"><svg width="28" height="28" viewBox="0 0 28 28"><circle cx="14" cy="14" r="5.500" fill="none" stroke="#ddd" stroke-width="4.500"/><circle cx="14" cy="14" r="8.700" fill="none" stroke="#ddd" stroke-width="3" stroke-dasharray="3.800 3.030"/></svg><i class="tri wide"></i></div>
    <div class="g g6"><svg width="28" height="28" viewBox="0 0 28 28"><path stroke="#e4e4e4" stroke-width="3" d="M14 4v20M4 14h20"/></svg></div>
    <div class="g g7"><svg width="28" height="28" viewBox="0 0 28 28"><path fill="none" stroke="#ddd" stroke-width="1.300" d="M4 4h8v8H4zM11 16l5 8H6z"/><circle cx="19" cy="13" r="4" fill="none" stroke="#ddd" stroke-width="1.300"/></svg></div>
    <div class="g g8"><svg width="28" height="28" viewBox="0 0 28 28"><path fill="none" stroke="#ccc" stroke-width="2" d="M8 10V5h12v5M7 21H4V11h20v10h-3M5 15h18"/><path fill="#f7b07c" stroke="#eee" d="M8.500 17.500h11v7h-11z"/></svg></div>
    <div class="g g9"><svg width="28" height="28" viewBox="0 0 28 28"><path fill="none" stroke="#ddd" stroke-width="1.500" d="M5 6h18v15H5zM8 18l4-4M20 9l-4 4"/><path fill="#ddd" d="M7 14v5h5zM21 13V8h-5z"/></svg><svg width="28" height="28" viewBox="0 0 28 28"><path stroke="#ddd" stroke-width="2" d="M5 5h20M5 14h20M5 23h20"/></svg></div>
  </div>
</div>

<aside class="balloon">
  <div class="bhead"><svg width="20" height="20" viewBox="0 0 20 20"><circle cx="10" cy="10" r="9" fill="#2b55c0" stroke="#b7bcc8" stroke-width="2"/><path fill="#fff" d="M8.500 3.500h3V6h-3zM8 8h3.500v6H13v1.500H7.500V14h1V9.500H8z"/></svg><b>Plot and Publish Job Complete</b><button><svg width="12" height="12" viewBox="0 0 12 12"><path stroke="#000" stroke-width="2" d="M1 1l10 10M11 1L1 11"/></svg></button></div>
  <p>No errors or warnings found</p>
  <a>Click to view plot and publish details...</a>
  <svg class="tail" width="28" height="28" viewBox="0 0 28 28"><path fill="#ffffe1" stroke="#000" d="M.5 1.500L26.500 25V1.500"/><path fill="#ffffe1" d="M1 0h25v2H1z"/></svg>
</aside>

<footer class="taskbar">
  <div class="start"><svg width="20" height="20" viewBox="0 0 20 20"><path fill="#fff" d="M0 3l8.500-1.200v7.700H0zM9.500 1.600L20 0v9.500H9.500zM0 10.500h8.500v7.700L0 17zM9.500 10.500H20V20L9.500 18.400z"/></svg></div>
  <div class="cortana"><i class="ring"></i><span>Type here to search</span><svg width="16" height="22" viewBox="0 0 16 22"><path fill="none" stroke="#222" stroke-width="1.500" d="M5 1.500h6v12H5zM1.500 9v5c0 3 3 3.500 6.500 3.500s6.500-.5 6.500-3.500V9M8 18v3M4.500 21h7"/></svg></div>
  <div class="tview"><svg width="22" height="20" viewBox="0 0 22 20"><path fill="none" stroke="#fff" stroke-width="1.300" d="M1 0v3h13V0M1 20v-3h13v3M1.700 6h11.600v8H1.700zM18.500 0v5M18.500 10v10"/><path fill="#fff" d="M17 6h3v3h-3z"/></svg></div>
  <div class="apps">
    <div class="run"><svg width="26" height="28" viewBox="0 0 26 28"><path fill="#0f7ee0" d="M1 12C2 4 7 0 14 0c8 0 12 6 12 13v3H9c0 4 3 6 7 6 3 0 6-1 8-2v6c-3 1.500-6 2-9 2C7 28 3 23 3 17c0-5 3-8 7-10-5 1-7 2-9 5zM9 11h9c0-3-1-5-4-5s-4.500 2-5 5z"/></svg></div>
    <div class="run"><svg width="28" height="26" viewBox="0 0 28 26"><path fill="#f0b83c" d="M0 1h10l2 3h15v6H0z"/><path fill="#ffe394" d="M0 5h28v20H0z"/><path fill="#3fa9e8" d="M5 13h18v13h-4v-7h-10v7H5z"/></svg></div>
    <div><svg width="30" height="30" viewBox="0 0 30 30"><path fill="none" stroke="#ddd" stroke-width="1.600" d="M10 8V4c0-4 10-4 10 0v4"/><path fill="#fff" d="M1 7h28l-1 22H2z"/><path fill="#f25022" d="M9 12h5.500v5.500H9z"/><path fill="#7fba00" d="M15.500 12H21v5.500h-5.500z"/><path fill="#00a4ef" d="M9 18.500h5.500V24H9z"/><path fill="#ffb900" d="M15.500 18.500H21V24h-5.500z"/></svg></div>
    <div><svg width="28" height="28" viewBox="0 0 28 28"><circle cx="14" cy="14" r="13.500" fill="url(#ecl)"/><path stroke="#b4b0d8" stroke-width="1.300" d="M1 11.500h26M.5 14.500h27M1 17.500h26"/></svg></div>
    <div class="run"><svg width="28" height="28" viewBox="-14 -14 28 28"><circle r="14" fill="#fcc934"/><path fill="#ea4335" d="M-12.100-7A14 14 0 0 1 12.100-7H0L-6 3.500z"/><path fill="#34a853" d="M-12.100-7L-5.500 4 0 7h3L-1 14A14 14 0 0 1-12.100-7z"/><circle r="6.500" fill="#fff"/><circle r="5" fill="#4285f4"/></svg></div>
    <div class="run act"><svg width="30" height="30" viewBox="0 0 30 30"><path fill="#fbe9e4" d="M0 0h30v30H0z"/><path fill="url(#red)" d="M12 3h7l6 24h-6l-2-6h-6l-2 6H5zM14 9l-3 8h5z"/></svg></div>
  </div>
  <div class="tray">
    <svg class="people" width="18" height="20" viewBox="0 0 18 20"><g fill="none" stroke="#fff" stroke-width="1.500"><circle cx="12.500" cy="4" r="3.200"/><circle cx="5.500" cy="10.500" r="3.200"/><path d="M8 13c1-4 2-5 4.500-5s4 2 4.500 6M1 19c.3-4 2-5.500 4.500-5.500S9.700 15 10 19"/></g></svg>
    <svg class="chev" width="16" height="9" viewBox="0 0 16 9"><path fill="none" stroke="#fff" stroke-width="1.500" d="M1 8l7-7 7 7"/></svg>
    <svg class="bat" width="20" height="16" viewBox="0 0 20 16"><path fill="none" stroke="#fff" stroke-width="1.300" d="M2 1h16v9H2z"/><path fill="#fff" d="M4 3h4v5H4zM0 4h2v3H0z"/><circle cx="13.500" cy="10" r="5.500" fill="#10893e"/><path fill="#fff" d="M12 8h3v3l-1.500 2L12 11z"/></svg>
    <svg class="wifi" width="17" height="17" viewBox="0 0 17 17"><g fill="none" stroke="#fff" stroke-width="1.300"><path d="M1 16C1 8 8 1 16 1"/><path d="M5 16C5 10 10 5 16 5"/><path d="M9 16c0-4 3-7 7-7"/></g><circle cx="14" cy="14.500" r="2" fill="#fff"/></svg>
    <svg class="vol" width="20" height="16" viewBox="0 0 20 16"><path fill="none" stroke="#fff" stroke-width="1.300" d="M1 5h3l4-4v14l-4-4H1zM11 5c1.500 2 1.500 4 0 6M14 3c3 3 3 7 0 10"/><path fill="none" stroke="#888" stroke-width="1.300" d="M17 1c4 4 4 10 0 14"/></svg>
    <span class="lang">ENG<br>US</span><span class="clock">08:49 PM<br>29-11-2018</span>
    <span class="note"><svg width="20" height="19" viewBox="0 0 20 19"><path fill="#fff" d="M0 0h20v16H9l-4 3v-3H0z"/><path stroke="#000" stroke-width="1.300" d="M4 4.500h12M4 8h12M4 11.500h8"/></svg><b>22</b></span>
  </div>
</footer>
</body>
</html>
```
FILE: styles.css
```css
* { box-sizing: border-box; }
body { margin: 0; width: 1920px; height: 1080px; overflow: hidden; background: #383838; color: #f2f2f2; font: 14px/20px "Open Sans", "Noto Sans", sans-serif; letter-spacing: -.15px; position: relative; display: flex; flex-direction: column; }
svg { display: block; flex: none; }
button { font: inherit; padding: 0; border: 0; }
.defs { position: absolute; }
.tri { flex: none; width: 0; height: 0; border: 3.500px solid transparent; border-top: 4px solid #fff; border-bottom: 0; }
.tri.wide { border-width: 5px 5px 0; }
.tri.dark { border-top-color: #3b4350; border-width: 5px 4.500px 0; }
.tri.dim { border-top-color: #bbb; }
.tri.gray { border-top-color: #888; border-width: 4px 4px 0; }

.top { height: 54px; flex: none; display: grid; grid-template: 29px 25px / 50px 1870px; background: #545454; }
.app { grid-row: 1 / 3; height: 50px; display: flex; align-items: center; gap: 3px; padding: 0 0 12px 4px; border: solid #000; border-width: 0 2px 2px 0; background: linear-gradient(#c9c9c9, #7d7d7d); }
.titlebar { display: flex; }
.qat { width: 327px; padding-left: 10px; display: grid; grid-template-columns: 30px 30px 30px 30px 31px 29px 30px 28px 17px 28px 17px 12px; align-items: center; background: linear-gradient(#a2a2a2, #5a5a5a); border-bottom: 1px solid #3a3a3a; }
.caption { width: 780px; background: #fff; color: #111; display: flex; align-items: center; justify-content: center; gap: 17px; letter-spacing: -.24px; font-size: 15px; white-space: nowrap; }
.info { width: 558px; display: flex; align-items: center; background: linear-gradient(#a2a2a2, #5a5a5a); border-bottom: 1px solid #3a3a3a; }
.play { margin: 0 6px 0 5px; }
.search { width: 225px; height: 28px; border: 1px solid #2f2f2f; background: #727272; color: #cfcfcf; font-style: italic; padding: 3px 3px; letter-spacing: -.03px; }
.i1 { margin-left: 2px; } .i2 { margin-left: 10px; } .signin { margin-left: 7px; width: 46px; white-space: nowrap; letter-spacing: 0; }
.t1 { margin-left: 60px; } .i3 { margin-left: 13px; } .i4 { margin-left: 9px; } .t2 { margin-left: 7px; }
.sep { width: 1px; height: 22px; background: #b0b0b0; margin: 0 11px 0 13px; }
.help { width: 20px; height: 20px; border-radius: 50%; background: #e9ebf2; border: 1px solid #2c3a66; color: #2c56b0; font: bold 16px/18px "Liberation Sans", sans-serif; text-align: center; letter-spacing: 0; }
.t3 { margin-left: 10px; }
.winbtns { flex: 1; background: #fff; display: flex; align-items: center; padding: 0 0 2px 50px; gap: 46px; }
.tabs { grid-column: 2; display: grid; grid-template-columns: 55px 60px 86px 94px 57px 77px 71px 75px 102px 112px 151px 32px 8px; align-items: center; padding-left: 6px; border-top: 1px solid #333; border-bottom: 1px solid #2d2d2d; color: #cfcfcf; white-space: nowrap; letter-spacing: 0; }
.tabs span { padding: 2px 0 0 22px; }
.tabs .on { padding: 1px 0 0 11px; height: 22px; background: linear-gradient(#787878, #5c5c5c); border: 1px solid #333; border-bottom: 0; border-radius: 2px 2px 0 0; color: #fff; align-self: end; }
.tabs svg { margin-left: 8px; }

.ribbon { height: 124px; flex: none; display: flex; background: linear-gradient(#4c4c4c, #3c3c3c); border-bottom: 1px solid #949494; }
.panel { display: flex; flex-direction: column; height: 123px; border-bottom: 1px solid #2b2b2b; border-right: 1px solid #3e3e3e; background: #5b5b5b; padding: 0 1px; }
.panel .body { height: 100px; display: flex; }
.panel > footer { height: 22px; background: linear-gradient(#484848, #505050); display: flex; align-items: center; justify-content: center; gap: 8px; position: relative; }
.draw { width: 278px; } .modify { width: 316px; } .annot { width: 211px; } .layers { width: 341px; } .block { width: 100px; } .props { width: 277px; } .groups { width: 85px; } .utils { width: 120px; } .clip { width: 100px; } .view { width: 78px; }
.diag { position: absolute; right: 5px; top: 8px; }
.props > footer { padding-right: 14px; }
.view > footer { padding-right: 17px; }
.tool { display: flex; flex-direction: column; align-items: center; padding-top: 7px; text-align: center; white-space: nowrap; flex: none; }
.tool > span { margin-top: 5px; }
.tool > .tri { margin-top: 3px; }
.draw .tool:nth-child(1) { width: 51px; } .draw .tool:nth-child(2) { width: 53px; } .draw .tool:nth-child(3) { width: 71px; } .draw .tool:nth-child(4) { width: 43px; }
.rows { padding-top: 4px; display: flex; flex-direction: column; flex: none; }
.rows > div { height: 30.600px; display: flex; align-items: center; }
.draw .rows { padding-left: 8px; } .draw .rows > div { gap: 10px; }
.modify .rows { padding-left: 6px; width: 91px; } .modify .rows > div { gap: 6px; }
.modify .m2 { width: 89px; } .modify .m3 { width: 94px; }
.modify .m3 .tri { margin-left: 8px; } .modify .m3 .a { margin-left: 5px; }
.annot .tool:nth-child(1) { width: 57px; } .annot .tool:nth-child(2) { width: 73px; letter-spacing: 0; }
.annot .rows { padding-left: 7px; } .annot .rows > div { gap: 7px; } .annot .rows .tri { margin-left: 3px; }
.layers .tool { width: 76px; } .layers .lcol { width: 261px; padding-top: 5px; }
.combo { height: 28px; display: flex; align-items: center; border: 1px solid #333; background: linear-gradient(#5a5a5a, #6e6e6e); }
.layers .combo { width: 260px; padding-left: 6px; gap: 7px; } .combo > .tri:last-child { margin-left: auto; margin-right: 2px; }
.layers .combo svg:nth-child(3) { margin-left: -1px; }
.swatch { width: 20px; height: 20px; background: #fff; border: 1px solid #ccc; } .swatch.b { width: 18px; height: 19px; border-color: #000; }
.lrow { display: flex; align-items: center; gap: 10px; height: 31px; padding-left: 4px; white-space: nowrap; } .lrow span { margin: -1px 0 0 -3px; letter-spacing: -.2px; }
.combo + .lrow { margin-top: 2px; }
.block .tool { width: 51px; } .block .rows { padding-left: 3px; } .block .rows > div { gap: 9px; }
.props .tool { width: 76px; } .props .rows { padding-left: 2px; width: 25px; } .props .rows > div { height: 30px; }
.pcombos { width: 172px; padding-top: 6px; display: grid; grid-template-rows: 28px 28px 28px; gap: 2px; align-content: start; }
.c1 .swatch { margin: 0 13px; } .rule { width: 80px; height: 1px; background: #fff; margin: 0 2px 0 4px; }
.groups .tool { width: 49px; } .groups .rows { padding-left: 6px; } .groups .sel { width: 29px; height: 28px; margin: 1px 0 0 -5px; padding-left: 5px; background: #5a82b8; border: 1px solid #24355a; }
.utils .tool { width: 86px; } .utils .rows { padding-left: 4px; }
.clip .tool { width: 66px; } .clip .rows { padding-left: 2px; }
.view .tool { width: 75px; }

.files { position: relative; flex: none; height: 36px; background: #383838; border-bottom: 5px solid #5a5a5a; display: flex; align-items: center; padding-top: 6px; }
.shapes { position: absolute; left: 0; top: 0; }
.files span { position: relative; } .f1 { margin-left: 39px; width: 154px; color: #bababa; letter-spacing: .1px; } .f2 { color: #fff; letter-spacing: 0; }

.viewport { position: relative; flex: none; height: 781px; width: 1920px; background: #222830; }
.viewport::after { content: ""; position: absolute; right: 0; top: 0; width: 11px; height: 781px; background: linear-gradient(90deg, #b9d0ea 7px, #35bcd8 7px, #35bcd8 8px, #000 8px); }
.lbl { font: 9.200px "Liberation Sans", sans-serif; fill: #f4f4f4; letter-spacing: -.25px; }
.glow { stroke: #ddd; stroke-width: .9px; stroke-opacity: .7; }
.ucs { font: 300 21px "Open Sans", sans-serif; fill: #e8e8e8; }
.vp { font: 14px "Open Sans", sans-serif; fill: #dcdcdc; }
.top-face { font: bold 15px "Open Sans", sans-serif; fill: #4d525a; letter-spacing: 0; }
.compass { font: bold 22px "Liberation Sans", sans-serif; fill: #b0b0b0; text-anchor: middle; letter-spacing: 0; }
.wcs { font: 13px "Liberation Sans", sans-serif; fill: #53566a; letter-spacing: .2px; }
.mdi { fill: #e4e4e4; }
.cmd { position: absolute; left: 467px; top: 747px; width: 986px; height: 34px; border: 1px solid #6b6b6b; border-radius: 4px; background: #fff; display: flex; align-items: center; overflow: hidden; }
.grip { width: 68px; margin-right: 5px; background: linear-gradient(#8a8a8a, #444); }
.caret { width: 1px; height: 19px; background: #000; margin-left: 5px; } .up { margin: 0 6px 0 auto; }

.bottom { flex: none; height: 35px; display: flex; border-top: 1px solid #585858; background: #383838; }
.layouts { position: relative; width: 1211px; color: #b8b8b8; }
.layouts b, .layouts span { position: absolute; top: 1px; }
.layouts b { left: 28px; color: #fff; letter-spacing: 0; } .l1 { left: 101px; letter-spacing: .1px; } .l2 { left: 182px; letter-spacing: .1px; }
.status { display: flex; }
.g { height: 34px; border: solid #7c7c7c; border-width: 1px 1px 2px 1px; background: #484848; display: flex; align-items: center; flex: none; }
.on { background: #5c8cc4; }
.g1 { width: 62px; padding-left: 5px; font-size: 14.500px; } .g2 { width: 84px; padding-left: 2px; } .g2 .tri { margin-left: 7px; }
.g3 { width: 210px; padding-left: 1px; } .g3 .tri { margin-left: 6px; } .g3 .iso { margin-left: 9px; } .g3 .iso + .tri { margin: 0 7px 0 9px; } .g3 .n { margin-left: 2px; }
.g4 { width: 134px; padding-left: 1px; gap: 2px; } .g4 span { margin-left: 2px; letter-spacing: -.5px; } .g4 .tri { margin-left: 2px; }
.g5 { width: 51px; padding-left: 1px; } .g5 .tri { margin-left: 5px; }
.g6 { width: 31px; } .g7 { width: 34px; padding-left: 2px; } .g8 { width: 40px; padding-left: 5px; } .g9 { width: 63px; padding-left: 2px; }

.balloon { position: absolute; left: 1592px; top: 879px; width: 316px; height: 106px; border: 1px solid #000; border-radius: 19px; background: #ffffe1; color: #000; padding: 12px 11px 0 11px; white-space: nowrap; }
.bhead { display: flex; align-items: center; height: 20px; } .bhead b { margin-left: 13px; letter-spacing: .15px; }
.bhead button { margin-left: auto; width: 20px; height: 20px; background: #f0f0f0; border: 1px solid #9a9a9a; display: flex; align-items: center; justify-content: center; }
.balloon p { margin: 9px 0 8px 6px; letter-spacing: 0; } .balloon a { margin-left: 6px; color: #0000e8; text-decoration: underline; letter-spacing: .13px; }
.tail { position: absolute; left: 215px; top: 102px; }

.taskbar { height: 50px; flex: none; display: flex; background: radial-gradient(ellipse 60px 50px at 1305px 20px, #2a0c0a, transparent), linear-gradient(90deg, transparent 1390px, #1d1c1c 1400px, #151313 1420px, transparent 1425px), radial-gradient(ellipse 120px 60px at 1560px 25px, #1c0808, transparent), linear-gradient(90deg, #14191a, #0a0c0d 500px, #040404 900px, #0b0606 1300px, #000 1650px); }
.start { width: 60px; display: flex; align-items: center; justify-content: center; }
.cortana { width: 430px; background: #f2f2f2; border-top: 1px solid #ccc; color: #333; display: flex; align-items: center; padding: 0 18px 0 11px; font-size: 16.500px; letter-spacing: -.2px; }
.cortana span { flex: 1; margin-left: 12px; } .ring { width: 27px; height: 27px; border: 4px solid #111; border-radius: 50%; box-shadow: 0 0 1px #555; }
.tview { width: 63px; display: flex; align-items: center; padding-left: 19px; }
.apps { display: flex; width: 372px; }
.apps > div { width: 62px; display: flex; align-items: center; justify-content: center; position: relative; }
.apps .run::after { content: ""; position: absolute; bottom: 0; left: 6px; right: 5px; height: 4px; background: #76b9ed; }
.apps .act { background: #3d3b3b; } .apps .act::after { left: 0; right: 0; }
.tray { flex: 1; display: flex; align-items: center; padding-left: 633px; line-height: 22px; font-size: 14px; color: #fff; text-align: center; white-space: nowrap; }
.chev { margin-left: 28px; } .bat { margin-left: 12px; } .wifi { margin-left: 13px; } .vol { margin-left: 9px; }
.lang { width: 34px; margin-left: 11px; letter-spacing: -.1px; } .clock { width: 84px; margin-left: 9px; letter-spacing: -.1px; }
.note { position: relative; margin-left: 20px; } .note b { position: absolute; left: 7px; top: 9px; width: 24px; height: 22px; border-radius: 11px; background: #333; border: 1px solid #888; font-size: 12.500px; line-height: 19px; }
```
